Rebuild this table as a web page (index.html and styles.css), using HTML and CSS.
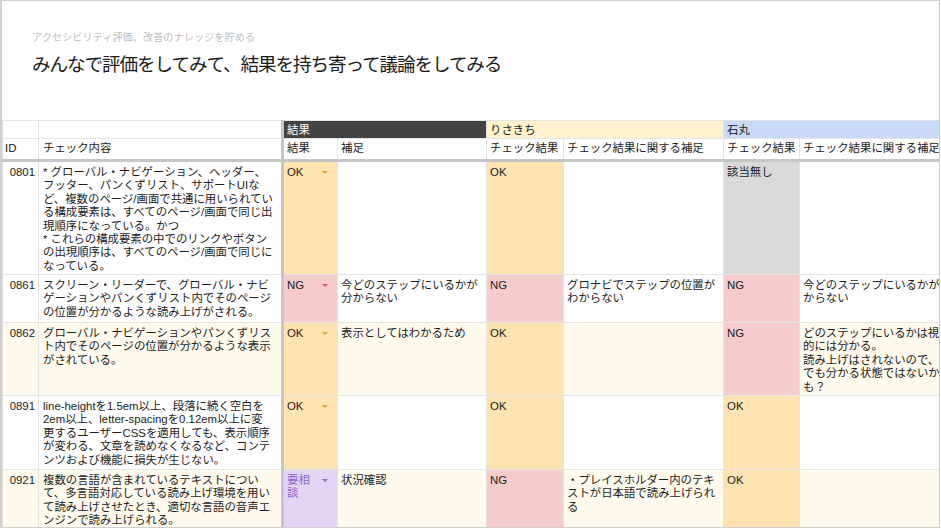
FILE: index.html
```html
<!DOCTYPE html>
<html lang="ja">
<head>
<meta charset="utf-8">
<title>アクセシビリティ評価</title>
<link rel="stylesheet" href="styles.css">
</head>
<body>
<div class="slide">
  <header class="head">
    <p class="sub">アクセシビリティ評価、改善のナレッジを貯める</p>
    <h1 class="title">みんなで評価をしてみて、結果を持ち寄って議論をしてみる</h1>
  </header>
  <table class="sheet">
    <colgroup>
      <col class="c-id"><col class="c-check"><col class="c-res"><col class="c-note1"><col class="c-res2"><col class="c-note2"><col class="c-res3"><col class="c-note3">
    </colgroup>
    <tr class="grp">
      <td></td><td class="frz"></td>
      <td colspan="2" class="g-dark">結果</td>
      <td colspan="2" class="g-yellow">りさきち</td>
      <td colspan="2" class="g-blue">石丸</td>
    </tr>
    <tr class="colh">
      <td>ID</td><td class="frz">チェック内容</td><td>結果</td><td>補足</td><td>チェック結果</td><td>チェック結果に関する補足</td><td>チェック結果</td><td>チェック結果に関する補足</td>
    </tr>
    <tr class="r1">
      <td class="id">0801</td>
      <td class="frz">* グローバル・ナビゲーション、ヘッダー、<br>フッター、パンくずリスト、サポートUIな<br>ど、複数のページ/画面で共通に用いられてい<br>る構成要素は、すべてのページ/画面で同じ出<br>現順序になっている。かつ<br>* これらの構成要素の中でのリンクやボタン<br>の出現順序は、すべてのページ/画面で同じに<br>なっている。</td>
      <td class="ok"><div class="dd"><span>OK</span><i class="arw"></i></div></td>
      <td></td>
      <td class="ok">OK</td>
      <td></td>
      <td class="na">該当無し</td>
      <td></td>
    </tr>
    <tr class="r2">
      <td class="id">0861</td>
      <td class="frz">スクリーン・リーダーで、グローバル・ナビ<br>ゲーションやパンくずリスト内でそのページ<br>の位置が分かるような読み上げがされる。</td>
      <td class="ng"><div class="dd"><span>NG</span><i class="arw"></i></div></td>
      <td>今どのステップにいるかが<br>分からない</td>
      <td class="ng">NG</td>
      <td>グロナビでステップの位置が<br>わからない</td>
      <td class="ng">NG</td>
      <td>今どのステップにいるかが分<br>からない</td>
    </tr>
    <tr class="r3 band">
      <td class="id">0862</td>
      <td class="frz">グローバル・ナビゲーションやパンくずリス<br>ト内でそのページの位置が分かるような表示<br>がされている。</td>
      <td class="ok"><div class="dd"><span>OK</span><i class="arw"></i></div></td>
      <td>表示としてはわかるため</td>
      <td class="ok">OK</td>
      <td></td>
      <td class="ng">NG</td>
      <td>どのステップにいるかは視覚<br>的には分かる。<br>読み上げはされないので、<br>でも分かる状態ではないか<br>も？</td>
    </tr>
    <tr class="r4">
      <td class="id">0891</td>
      <td class="frz">line-heightを1.5em以上、段落に続く空白を<br>2em以上、letter-spacingを0.12em以上に変<br>更するユーザーCSSを適用しても、表示順序<br>が変わる、文章を読めなくなるなど、コンテ<br>ンツおよび機能に損失が生じない。</td>
      <td class="ok"><div class="dd"><span>OK</span><i class="arw"></i></div></td>
      <td></td>
      <td class="ok">OK</td>
      <td></td>
      <td class="ok">OK</td>
      <td></td>
    </tr>
    <tr class="r5 band">
      <td class="id">0921</td>
      <td class="frz">複数の言語が含まれているテキストについ<br>て、多言語対応している読み上げ環境を用い<br>て読み上げさせたとき、適切な言語の音声エ<br>ンジンで読み上げられる。</td>
      <td class="ask"><div class="dd"><span>要相<br>談</span><i class="arw"></i></div></td>
      <td>状況確認</td>
      <td class="ng">NG</td>
      <td>・プレイスホルダー内のテキ<br>ストが日本語で読み上げられ<br>る</td>
      <td class="ok">OK</td>
      <td></td>
    </tr>
  </table>
</div>
</body>
</html>
```

FILE: styles.css
```css
* { box-sizing: border-box; }

body {
  margin: 0;
  background: #fff;
  font-family: "Liberation Sans", "Noto Sans CJK JP", sans-serif;
}

.slide {
  width: 940px;
  height: 528px;
  border: 1px solid #cfcfcf;
  border-left-width: 2px;
  overflow: hidden;
  background: #fff;
}

.head {
  height: 119px;
  padding: 29px 0 0 30px;
  font-family: "Noto Sans CJK JP", sans-serif;
}

.sub {
  margin: 0;
  font-size: 10.2px;
  line-height: 14px;
  color: #bdbdbd;
}

.title {
  margin: 7px 0 0;
  font-size: 18.6px;
  letter-spacing: -1.1px;
  line-height: 24px;
  font-weight: 400;
  color: #1a1a1a;
}

.sheet {
  border-collapse: collapse;
  table-layout: fixed;
  width: 997px;
  font-size: 11.4px;
  line-height: 13.4px;
  color: #1c1c1c;
}

.c-id { width: 36px; }
.c-check { width: 244px; }
.c-res { width: 55px; }
.c-note1 { width: 149px; }
.c-res2 { width: 77px; }
.c-note2 { width: 160px; }
.c-res3 { width: 76px; }
.c-note3 { width: 200px; }

.sheet td {
  border: 1px solid #e4e4e4;
  padding: 4px 3px 0;
  vertical-align: top;
  white-space: nowrap;
  overflow: hidden;
}

.sheet td.frz {
  border-right: 3px solid #c6c6c6;
  padding-left: 4px;
}

.grp { height: 18px; }
.grp td { padding: 2px 3px 0; line-height: 14px; }
.g-dark { background: #434343; color: #fff; }
.g-yellow { background: #fff2cc; }
.g-blue { background: #c9daf8; }

.colh { height: 22px; }
.colh td {
  padding: 3px 3px 0;
  border-bottom: 3px solid #c6c6c6;
  background: #fff;
}
.colh td:first-child { padding-left: 2px; }

.r1 { height: 114px; }
.r2 { height: 48px; }
.r3 { height: 73px; }
.r4 { height: 74px; }
.r5 { height: 70px; }

.band td { background: #fffaee; }

.sheet td.id { text-align: right; padding-right: 3px; }

.sheet td.ok { background: #fee3b2; }
.sheet td.ng { background: #f5cccb; }
.sheet td.na { background: #d9d9d9; }
.sheet td.ask { background: #e4d4f4; color: #8a63d0; }

.dd {
  display: flex;
  justify-content: space-between;
  align-items: flex-start;
}

.arw {
  width: 0;
  height: 0;
  margin: 5px 6px 0 0;
  border-left: 3px solid transparent;
  border-right: 3px solid transparent;
  border-top: 3.5px solid #e3a236;
}
.ng .arw { border-top-color: #e05c5c; }
.ask .arw { border-top-color: #8e6fd0; }
```
